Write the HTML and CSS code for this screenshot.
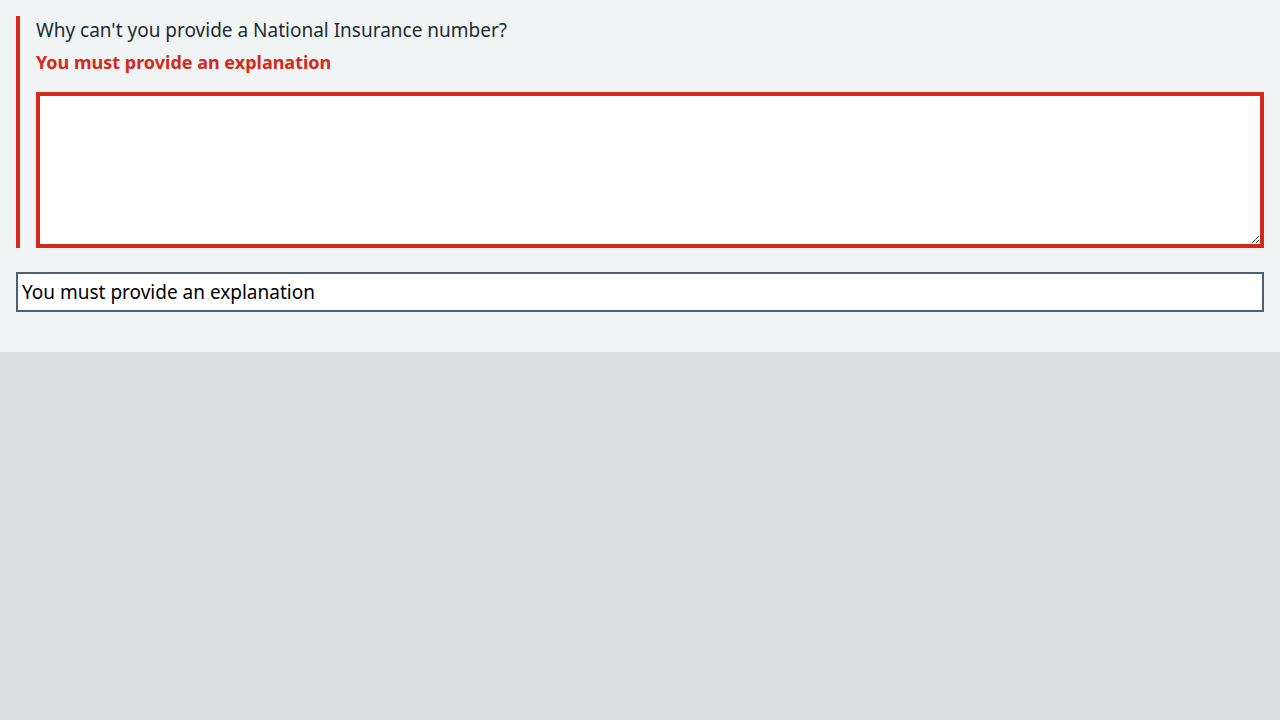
FILE: index.html
```html
<!DOCTYPE html>
<html lang="en">
<head>
<meta charset="utf-8">
<title>National Insurance number</title>
<link rel="stylesheet" href="styles.css">
</head>
<body>
<main class="panel">
  <div class="form-group form-group--error">
    <label class="label" for="reason">Why can't you provide a National Insurance number?</label>
    <span class="error-message">You must provide an explanation</span>
    <textarea class="textarea textarea--error" id="reason" rows="5"></textarea>
  </div>
  <div class="output">You must provide an explanation</div>
</main>
</body>
</html>
```
FILE: styles.css
```css
html, body {
  margin: 0;
  padding: 0;
}
body {
  background: #d8dde0;
  font-family: "Noto Sans", "Open Sans", "Liberation Sans", sans-serif;
  color: #212b32;
  min-height: 720px;
}
.panel {
  display: flex;
  flex-direction: column;
  background: #f0f4f5;
  padding: 16px 16px 40px 16px;
}
.form-group {
  display: flex;
  flex-direction: column;
  margin-bottom: 24px;
}
.form-group--error {
  border-left: 4px solid #d5281b;
  padding-left: 16px;
}
.label {
  font-size: 19px;
  line-height: 28px;
  margin-bottom: 4px;
  color: #212b32;
}
.error-message {
  font-size: 18px;
  line-height: 28px;
  font-weight: 700;
  color: #d5281b;
  margin-bottom: 16px;
}
.textarea {
  box-sizing: border-box;
  display: block;
  width: 100%;
  height: 156px;
  margin: 0;
  padding: 4px;
  border: 4px solid #d5281b;
  border-radius: 0;
  background: #ffffff;
  font-family: inherit;
  font-size: 19px;
}
.output {
  box-sizing: border-box;
  height: 40px;
  border: 2px solid #4c6272;
  background: #ffffff;
  padding: 0 4px;
  font-size: 19px;
  line-height: 36px;
  color: #000000;
}
```
